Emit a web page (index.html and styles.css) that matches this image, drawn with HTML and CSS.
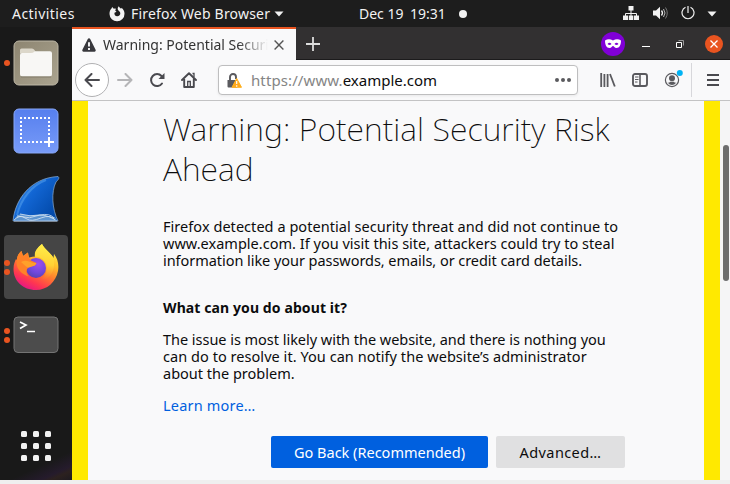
FILE: index.html
```
<!DOCTYPE html>
<html lang="en">
<head>
<meta charset="utf-8">
<title>Warning: Potential Security Risk Ahead</title>
<link rel="stylesheet" href="styles.css">
</head>
<body>
<div class="desktop">
  <header class="topbar">
    <span class="activities">Activities</span>
    <svg class="app-icon" width="16" height="16" viewBox="0 0 16 16"><path d="M3.200 1 4.800 2.800Q6 2.300 7 2.800L6.200 4.500 7.500 5.800 5.500 6.800c-.500 1.800.800 3.500 2.700 3.500 2 0 3.300-1.600 3.100-3.400C11.100 5.500 9.500 5 8.800 3.500 8.500 2.200 9 1 9.800.2c.5 1.200 1.500 1.800 2.400 2.500l.3-1c2 1.500 3 3.700 3 6A7.500 7.500 0 0 1 .5 8c0-2.300.7-4.300 2-5.500z" fill="#f2f2f2"/></svg>
    <span class="app-name">Firefox Web Browser</span>
    <svg class="app-caret" width="10" height="6" viewBox="0 0 10 6"><path d="M.5.5h9L5 5.500z" fill="#f2f2f2"/></svg>
    <span class="date">Dec 19</span>
    <span class="time">19:31</span>
    <i class="notice"></i>
    <div class="status">
      <svg width="16" height="14" viewBox="0 0 16 14"><path d="M5.500 0h5v4.500h-5zM0 9.500h5V14H0zM5.800 9.500h4.500V14H5.800zM11 9.500h5V14h-5z" fill="#f2f2f2"/><path d="M8 4v6M2.500 10V7.500h11V10" fill="none" stroke="#f2f2f2"/></svg>
      <svg width="16" height="14" viewBox="0 0 16 14"><path d="M0 4.500h3L7 .8v12.400L3 9.500H0z" fill="#f2f2f2"/><path d="M8.500 4.500q2 2.500 0 5" fill="none" stroke="#f2f2f2" stroke-width="1.300"/><path d="M10.500 3q3 4 0 8" fill="none" stroke="#bbb"/><path d="M12.500 1.500q3.500 5.500 0 11" fill="none" stroke="#777"/></svg>
      <svg width="14" height="14" viewBox="0 0 14 14"><path d="M4.500 1.300a6 6 0 1 0 5 0M7 0v7" fill="none" stroke="#f2f2f2" stroke-width="1.200"/></svg>
      <svg width="10" height="6" viewBox="0 0 10 6"><path d="M.5.5h9L5 5.500z" fill="#f2f2f2"/></svg>
    </div>
  </header>

  <div class="workspace">
    <nav class="dock">
      <div class="dock-item files"><span class="dots"><i></i></span>
        <svg width="46" height="46" viewBox="0 0 46 46"><defs><linearGradient id="fg" x2="1" y2="1"><stop stop-color="#8d8571"/><stop offset="1" stop-color="#aaa38f"/></linearGradient></defs><rect x="1" y="1" width="44" height="44" rx="5" fill="url(#fg)" stroke="#bcb6a5"/><path d="M7 12V10q0-1.500 1.500-1.500H19q1.500 0 2.500 1.500l2 3.500H7z" fill="#dcd7ca"/><path d="M7 15q0-2 2-2h9q2 0 3-1l1-.8h15q2 0 2 2V34q0 2.500-2.500 2.500h-27Q7 36.500 7 34z" fill="#f8f7f5"/><path d="M8 37h30" stroke="#837c6b"/></svg>
      </div>
      <div class="dock-item shot">
        <svg width="46" height="46" viewBox="0 0 46 46"><defs><linearGradient id="sg" x2="0" y2="1"><stop stop-color="#567fee"/><stop offset="1" stop-color="#789bf8"/></linearGradient></defs><rect x="1" y="1" width="44" height="44" rx="5" fill="url(#sg)" stroke="#88a8f8"/><path d="M7 10h30M7 34h24" fill="none" stroke="#fff" stroke-width="2" stroke-dasharray="2 2"/><path d="M8 13v20M36 13v16" fill="none" stroke="#fff" stroke-width="2" stroke-dasharray="2 2"/><path d="M36 29v10M31 34h10" stroke="#fff" stroke-width="2"/></svg>
      </div>
      <div class="dock-item shark">
        <svg width="48" height="48" viewBox="0 0 48 48"><defs><linearGradient id="wg" x1=".1" y1=".2" x2=".9" y2=".8"><stop stop-color="#4a9cf0"/><stop offset=".35" stop-color="#1266d4"/><stop offset="1" stop-color="#034aaa"/></linearGradient></defs><path d="M1 46C3 25 18 3 46 1.500 48 3 46 5 44 7 39 17 40 34 46 46z" fill="url(#wg)" stroke="#8daed0" stroke-width=".7"/><path d="M5 40C9 24 20 10 34 5" fill="none" stroke="#4e9bea" stroke-width="2" opacity=".6"/><path d="M2 45q3-6 7-6 7 2 14 1t12 1l8 1 2 4z" fill="#5d94cf"/><path d="M2 45q5-5 10-3t12-1 18 3M5 41q6 0 10 3t14-1 14 2M8 39q10 3 20 1t14 3M2 46h43" fill="none" stroke="#d5e4f3" stroke-width=".8"/></svg>
      </div>
      <div class="dock-item active"><span class="dots"><i></i><i></i></span>
        <svg width="46" height="48" viewBox="0 0 46 48"><defs><linearGradient id="ff" x1=".8" y1=".05" x2=".3" y2="1"><stop stop-color="#fff44f"/><stop offset=".3" stop-color="#ffc22b"/><stop offset=".55" stop-color="#ff7b2e"/><stop offset=".8" stop-color="#ff3750"/><stop offset="1" stop-color="#e31587"/></linearGradient><radialGradient id="fp" cx=".6" cy=".3" r=".75"><stop stop-color="#a04df0"/><stop offset=".6" stop-color="#7048dc"/><stop offset="1" stop-color="#5a41ad"/></radialGradient><linearGradient id="fl" x1=".6" y1="0" x2=".5" y2="1"><stop stop-color="#fff04a"/><stop offset=".55" stop-color="#ffd235"/><stop offset="1" stop-color="#ff8a2c" stop-opacity="0"/></linearGradient></defs><path d="M29 1c2 5 9 9 11.500 14l.5-4c4 5 5 11 4 17-2 11-11 19-22 19C10 47 .5 38 .5 26 .5 21 2 18 3 16l1 1C4 13 6 10 8.500 8l1.500 5 5-3.500 1 5q4-1 6-1-1-6 7-12.500z" fill="url(#ff)"/><circle cx="23" cy="25" r="10" fill="url(#fp)"/><path d="M4 17C4 13 6 10 8.500 8l1.500 5 5-3.500c0 4 1 6 3 8l5.500 2.500q-1 3-5 3.500c-3 .5-5 2-5 5q0 3 2 5C8 31 2 25 4 17z" fill="#ff8228"/><path d="M8 19q4-2 8-.5 4 1.500 7.500 1.500-1 3-5 3.500-4 2-6-.5z" fill="#ffa02b"/><path d="M22 13.500c5 0 9 3 11 7 2 8-1 15-9 17 10 1 17-6 17-16 0-3 0-5-.5-6.500C38 10 31 6 29 1c-5 4-8 8-7 12.500z" fill="url(#fl)"/></svg>
      </div>
      <div class="dock-item term"><span class="dots"><i></i><i></i></span>
        <svg width="46" height="38" viewBox="0 0 46 38"><rect x="1" y="1" width="44" height="35.500" rx="4" fill="#4c4c4c" stroke="#747474"/><path d="M7 6l6 3-6 3.500" fill="none" stroke="#fff" stroke-width="1.700"/><path d="M14 15.500h8" stroke="#fff" stroke-width="1.500"/></svg>
      </div>
      <div class="apps"><i></i><i></i><i></i><i></i><i></i><i></i><i></i><i></i><i></i></div>
    </nav>

    <main class="window">
      <div class="tabstrip">
        <div class="tab">
          <svg width="14" height="14" viewBox="0 0 14 14"><path d="M7 .3q.8 0 1.200.8l5.400 10.700q.6 1.500-1 1.900H1.400Q-.2 13.300.4 11.800L5.800 1.100Q6.200.3 7 .3z" fill="#38383d"/><path d="M7 4.200v4.300M7 10v2" stroke="#f9f9fa" stroke-width="1.900"/></svg>
          <span class="tab-title">Warning: Potential Security</span>
          <svg class="tab-close" width="10" height="10" viewBox="0 0 10 10"><path d="M.6.6l8.800 8.800M9.400.6.6 9.400" stroke="#555" stroke-width="1.400"/></svg>
        </div>
        <svg class="new-tab" width="14" height="14" viewBox="0 0 14 14"><path d="M7 0v14M0 7h14" stroke="#ddd" stroke-width="1.800"/></svg>
        <div class="private"><svg width="16" height="10" viewBox="0 0 16 10"><path fill-rule="evenodd" d="M0 1.500Q4-.8 8 1.600 12-.8 16 1.500C16 6 14.500 9 11.500 9 9.500 9 9 7 8 7S6.500 9 4.500 9C1.500 9 0 6 0 1.500zM2.500 5q2.200 2 4 0-2-2.500-4 0zm7 0q2 2 4 0-2-2.500-4 0z" fill="#fff"/></svg></div>
        <i class="minimize"></i>
        <svg class="restore" width="8" height="8" viewBox="0 0 8 8"><path d="M.5 2.500h5v5h-5z" fill="none" stroke="#fff"/><path d="M2.500.5h5v5" fill="none" stroke="#999"/></svg>
        <div class="close"><svg width="8" height="8" viewBox="0 0 8 8"><path d="M.5.5l7 7M7.500.5l-7 7" stroke="#fff" stroke-width="1.300"/></svg></div>
      </div>

      <div class="navbar">
        <div class="back"><svg width="16" height="14" viewBox="0 0 16 14"><path d="M7.500 1 1.500 7l6 6M1.500 7H15" fill="none" stroke="#4a4a4f" stroke-width="2" stroke-linecap="round" stroke-linejoin="round"/></svg></div>
        <svg class="forward" width="16" height="14" viewBox="0 0 16 14"><path d="M8.500 1l6 6-6 6M14.500 7H1" fill="none" stroke="#b5b5b7" stroke-width="2" stroke-linecap="round" stroke-linejoin="round"/></svg>
        <svg class="reload" width="16" height="16" viewBox="0 0 16 16"><path d="M13 11.500A6 6 0 1 1 12.500 4" fill="none" stroke="#4a4a4f" stroke-width="2" stroke-linecap="round"/><path d="M15.500 1v6h-6z" fill="#4a4a4f"/></svg>
        <svg class="home" width="16" height="16" viewBox="0 0 16 16"><path d="M1 8l7-6.800L15 8M3.200 7v8h9.600V7" fill="none" stroke="#4a4a4f" stroke-width="1.900" stroke-linecap="round" stroke-linejoin="round"/><path d="M6.700 15V9.500h2.600V15M11.500 1.500H13V5" fill="none" stroke="#4a4a4f" stroke-width="1.300"/></svg>
        <div class="urlbar">
          <svg width="15" height="15" viewBox="0 0 15 15"><path d="M3 8V4a3 3 0 0 1 6 0v2" fill="none" stroke="#5a5a5e" stroke-width="1.900"/><path d="M.5 7H10v7.500H1.500q-1 0-1-1z" fill="#5a5a5e"/><path d="M9.700 5.500 14.500 14.300H5z" fill="#ffa81c" stroke="#ffb11f" stroke-linejoin="round"/><path d="M9.700 8v3M9.700 12.200v1.500" stroke="#fff" stroke-width="1.200"/></svg>
          <span class="url"><span class="scheme">https://www.</span><span class="host">example.com</span></span>
          <span class="page-actions"><i></i><i></i><i></i></span>
        </div>
        <svg class="library" width="16" height="14" viewBox="0 0 16 14"><path d="M1.200 0v14M4.400 1v13M7.600 1v13" stroke="#5a5a5e" stroke-width="1.800"/><path d="M10 1l4.800 12.500" stroke="#5a5a5e" stroke-width="1.800"/></svg>
        <svg class="sidebar" width="16" height="14" viewBox="0 0 16 14"><rect x="1" y="1" width="14" height="12" rx="2" fill="none" stroke="#5a5a5e" stroke-width="1.900"/><path d="M8 1v12" stroke="#5a5a5e" stroke-width="1.600"/><path d="M3 4h3.500M3 6.500h3.500M3 9h2.500" stroke="#5a5a5e"/></svg>
        <svg class="account" width="19" height="18" viewBox="0 0 19 18"><circle cx="8" cy="10" r="6.600" fill="none" stroke="#5a5a5e" stroke-width="1.200"/><circle cx="8" cy="8.300" r="3" fill="#5a5a5e"/><path d="M3.500 12.500q2 .5 2.500-.8h4q.5 1.300 2.500.8-4.500 5-9 0z" fill="#5a5a5e"/><circle cx="15.800" cy="3" r="3" fill="#00b3f4"/></svg>
        <i class="separator"></i>
        <svg class="menu" width="12" height="12" viewBox="0 0 12 12"><path d="M0 1h12M0 6h12M0 11h12" stroke="#4a4a4f" stroke-width="2"/></svg>
      </div>

      <div class="viewport">
        <article class="page">
          <h1>Warning: Potential Security Risk<br>Ahead</h1>
          <p class="intro"><span class="l1">Firefox detected a potential security threat and did not continue to</span><br><span class="l2">www.example.com. If you visit this site, attackers could try to steal</span><br><span class="l3">information like your passwords, emails, or credit card details.</span></p>
          <h2>What can you do about it?</h2>
          <p class="advice"><span class="l4">The issue is most likely with the website, and there is nothing you</span><br><span class="l5">can do to resolve it. You can notify the website’s administrator</span><br><span class="l6">about the problem.</span></p>
          <a class="learn">Learn more…</a>
          <div class="buttons"><button class="primary">Go Back (Recommended)</button><button class="secondary">Advanced…</button></div>
        </article>
        <div class="scrollbar"><i></i></div>
      </div>
    </main>
  </div>
</div>
</body>
</html>
```
FILE: styles.css
```
* { box-sizing: border-box; }
body { margin: 0; font-family: "Noto Sans", "Open Sans", sans-serif; font-size: 14px; color: #0c0c0d; overflow: hidden; }
svg, i { display: block; flex: none; }
.desktop { width: 730px; height: 484px; background: #efefef; }
.topbar { display: flex; align-items: center; height: 27px; background: #1d1d1d; color: #f2f2f2; white-space: nowrap; }
.activities { width: 97px; padding-left: 12px; letter-spacing: .45px; }
.app-icon { margin-left: 12px; }
.app-name { width: 143px; padding-left: 6px; letter-spacing: .2px; }
.app-caret { margin-left: 6px; }
.date { width: 51px; margin-left: 75px; }
.time { width: 49px; }
.notice { width: 8px; height: 8px; border-radius: 50%; background: #f2f2f2; }
.status { display: flex; align-items: center; margin-left: auto; gap: 13px; padding-right: 13px; }
.status svg:first-child { margin-right: 1px; }
.status svg:nth-child(-n+3) { margin-top: -1px; }
.status svg:nth-child(2), .status svg:nth-child(3) { margin-right: -1px; }
.workspace { display: flex; height: 453px; }
.dock { width: 72px; padding-top: 4px; background: linear-gradient(155deg, #191919 0 94%, #251b2c 97%, #2c211f 98%, #1e1a20); }
.dock-item { position: relative; display: flex; align-items: center; justify-content: center; width: 64px; height: 64px; margin: 0 4px 4px; border-radius: 4px; }
.active { background: #454545; }
.dots { position: absolute; left: 0; display: grid; gap: 3px; }
.dots i { width: 6px; height: 6px; border-radius: 50%; background: #e95420; }
.apps { display: grid; grid-template-columns: repeat(3, 6px); gap: 6px; margin: 64px 0 0 21px; }
.apps i { width: 6px; height: 6px; border-radius: 1.500px; background: #f2f2f2; }
.window { width: 658px; }
.tabstrip { display: flex; align-items: center; height: 33px; background: linear-gradient(#323031 32px, #1c1b1c 32px); }
.tab { display: flex; align-items: center; width: 224px; height: 33px; border-top: 2px solid #e95420; background: #f9f9fa; padding-left: 10px; color: #333; }
.tab-title { width: 165px; margin-left: 7px; overflow: hidden; white-space: nowrap; -webkit-mask-image: linear-gradient(90deg, #000 135px, transparent 165px); mask-image: linear-gradient(90deg, #000 135px, transparent 165px); }
.tab-close { margin-left: 6px; }
.new-tab { margin-left: 10px; }
.private { display: grid; place-items: center; width: 24px; height: 24px; margin-left: 281px; border-radius: 50%; background: #8000d7; }
.minimize { width: 8px; height: 1px; margin: 5px 0 0 17px; background: #fff; }
.restore { margin-left: 26px; }
.close { display: grid; place-items: center; width: 18px; height: 18px; margin-left: 21px; border-radius: 50%; background: #e95420; }
.navbar { display: flex; align-items: center; height: 41px; background: #f9f9fa; border-bottom: 1px solid #c3c3c4; }
.back { display: grid; place-items: center; width: 34px; height: 34px; margin-left: 3px; border: 1px solid #b1b1b3; border-radius: 50%; background: #fff; }
.forward { margin-left: 8px; }
.reload { margin-left: 16px; }
.home { margin-left: 16px; }
.urlbar { display: flex; align-items: center; width: 360px; height: 30px; margin-left: 21px; padding: 0 6px 0 8px; border: 1px solid #bebebf; border-radius: 4px; background: #fff; box-shadow: 0 1px 3px #0001; }
.url { margin-left: 9px; font-size: 15px; white-space: nowrap; }
.scheme { color: #858585; letter-spacing: .1px; }
.page-actions { display: flex; gap: 2px; margin-left: auto; }
.page-actions i { width: 4px; height: 4px; border-radius: 50%; background: #5a5a5e; }
.library { margin-left: 22px; }
.sidebar { margin-left: 16px; }
.account { margin: -2px 0 0 16px; }
.separator { width: 1px; height: 34px; margin-left: 8px; background: #d7d7db; }
.menu { margin-left: 15px; }
.viewport { display: flex; height: 379px; background: #f5f5f6; }
.page { flex: none; width: 648px; padding: 8px 79px 0 75px; border: solid #ffe900; border-width: 0 16px; background: #f9f9fa; white-space: nowrap; }
h1 { margin: 0 0 29px; font: 200 32px/40px "Noto Sans", "Open Sans", sans-serif; letter-spacing: .06px; }
p { margin: 0; font-size: 14.5px; line-height: 17px; }
.l1 { letter-spacing: .045px; }
.l2 { letter-spacing: .02px; }
.l3 { letter-spacing: -.05px; }
.l4 { letter-spacing: -.03px; }
.l5 { letter-spacing: .05px; }
h2 { margin: 30px 0 15px; font-size: 14px; line-height: 17px; letter-spacing: .1px; }
.learn { display: block; margin-top: 15px; font-size: 14.5px; line-height: 17px; letter-spacing: .2px; color: #0060df; }
.buttons { display: flex; justify-content: flex-end; gap: 8px; margin-top: 22px; }
button { height: 32px; padding: 0; border: 0; border-radius: 2px; font: 14.5px "Noto Sans", sans-serif; }
.primary { width: 217px; background: #0060df; color: #fff; }
.secondary { width: 129px; background: #e0e0e1; color: #0c0c0d; letter-spacing: .4px; }
.scrollbar { width: 10px; padding: 44px 0 0 3px; }
.scrollbar i { width: 6px; height: 136px; border-radius: 3px; background: #6d6d6d; }
```
